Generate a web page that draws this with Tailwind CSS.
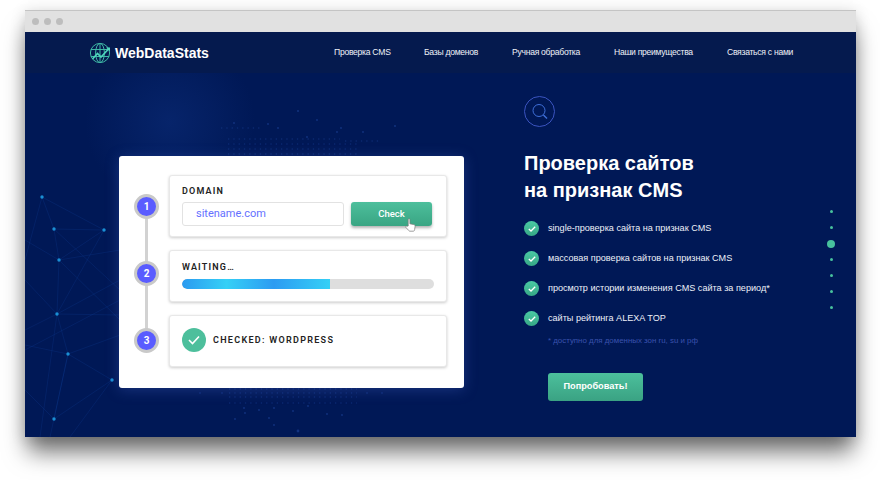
<!DOCTYPE html>
<html lang="ru">
<head>
<meta charset="utf-8">
<script src="https://cdn.jsdelivr.net/npm/@tailwindcss/browser@4"></script>
</head>
<body class="w-[880px] h-[480px] overflow-hidden bg-white font-['Liberation_Sans',Arial,sans-serif]">
<div class="pt-[10px] pl-[25px]">
  <div class="relative w-[831px] h-[427px] shadow-[0_18px_22px_-3px_rgba(0,0,0,0.55),0_2px_14px_rgba(0,0,0,0.16)]">
    <!-- window chrome -->
    <div class="h-[22px] bg-[#e1e1e1] border-t border-[#c4c4c4] border-b-[#9a9a9a] flex items-center gap-[5px] pl-[7px]">
      <span class="w-[7px] h-[7px] rounded-full bg-[#bdbdbd]"></span>
      <span class="w-[7px] h-[7px] rounded-full bg-[#bdbdbd]"></span>
      <span class="w-[7px] h-[7px] rounded-full bg-[#bdbdbd]"></span>
    </div>
    <!-- nav -->
    <header class="relative z-10 h-[41px] bg-[#051a4e] flex items-center pl-[64px] text-white">
      <svg class="w-[22px] h-[22px] shrink-0" viewBox="0 0 22 22" fill="none" stroke="#3fb8a6" stroke-width="1">
        <circle cx="11" cy="11" r="9.6"/>
        <ellipse cx="11" cy="11" rx="4.4" ry="9.6"/>
        <path d="M11 1.4V20.6M2 7.5H20M2 14.5H20"/>
        <path d="M3.5 17l5-5.5 3.5 3.5 8-8.5" stroke="#4fd6bd" stroke-width="1.6"/>
        <path d="M17 5.5h4v4z" fill="#4fd6bd" stroke="none"/>
      </svg>
      <span class="ml-[4px] w-[94px] text-[14px] leading-none font-bold whitespace-nowrap">WebDataStats</span>
      <nav class="ml-[125px] flex text-[8.6px] tracking-[-0.28px] leading-none text-[#eef1f8] whitespace-nowrap">
        <a class="w-[90px]">Проверка CMS</a>
        <a class="w-[88px]">Базы доменов</a>
        <a class="w-[102px]">Ручная обработка</a>
        <a class="w-[113px]">Наши преимущества</a>
        <a>Связаться с нами</a>
      </nav>
    </header>
    <!-- hero -->
    <main class="relative h-[364px] bg-[#001856] overflow-hidden flex text-white">
      <!-- decoration -->
      <svg class="absolute left-0 top-0 w-[831px] h-[364px]" viewBox="25 73 831 364" fill="none">
        <defs>
          <radialGradient id="glow"><stop offset="0" stop-color="#0b2c78" stop-opacity=".6"/><stop offset="1" stop-color="#0b2c78" stop-opacity="0"/></radialGradient>
        </defs>
        <circle cx="170" cy="122" r="85" fill="url(#glow)"/>
        <g stroke="#0f3a8c" stroke-width=".6" opacity=".5">
          <path d="M42 197L25 260M42 197L54 229M42 197L104 230M54 229L104 230M54 229L59 260M54 229L120 290M59 260L25 240M59 260L57 314M59 260L120 250M59 260L120 320M104 230L59 260M104 230L57 314M57 314L25 330M57 314L68 354M57 314L120 315M57 314L25 280M57 314L120 280M68 354L112 380M68 354L54 419M68 354L25 345M68 354L120 335M57 314L40 437M112 380L54 419M112 380L70 437M54 419L25 390M68 354L50 437M120 300L25 350"/>
        </g>
        <g fill="#1a8fd4">
          <circle cx="42" cy="197" r="1.7"/><circle cx="54" cy="229" r="1.7"/><circle cx="104" cy="230" r="1.7"/><circle cx="59" cy="260" r="1.7"/><circle cx="57" cy="314" r="1.7"/><circle cx="68" cy="354" r="1.7"/><circle cx="112" cy="380" r="1.7"/><circle cx="54" cy="419" r="1.7"/>
        </g>
        <g stroke="#1a3f92" stroke-width="1.1" stroke-dasharray="1.3 4" opacity=".65">
          <path d="M221 128H262M345 141H382M228 139H340M228 144H357M228 149H357M228 154H357"/>
          <path d="M229 389H357M229 393H357M229 397H357M229 403H357"/>
        </g>
        <g fill="#1a3f92" opacity=".7">
          <circle cx="298" cy="111" r="1"/><circle cx="317" cy="120" r=".9"/><circle cx="268" cy="124" r=".9"/><circle cx="278" cy="128" r=".9"/><circle cx="234" cy="123" r=".9"/><circle cx="341" cy="128" r=".9"/><circle cx="363" cy="132" r=".9"/><circle cx="395" cy="126" r="1"/><circle cx="307" cy="137" r=".9"/><circle cx="337" cy="132" r=".9"/>
          <circle cx="200" cy="393" r=".8"/><circle cx="222" cy="393" r=".8"/><circle cx="367" cy="393" r=".8"/><circle cx="382" cy="393" r=".8"/>
          <circle cx="244" cy="408" r=".9"/><circle cx="259" cy="410" r=".9"/><circle cx="274" cy="408" r=".9"/><circle cx="293" cy="411" r=".9"/><circle cx="308" cy="406" r=".9"/><circle cx="245" cy="413" r=".9"/><circle cx="235" cy="419" r=".9"/><circle cx="269" cy="418" r=".9"/><circle cx="274" cy="425" r=".9"/><circle cx="298" cy="431" r="1.4"/><circle cx="327" cy="414" r=".9"/><circle cx="342" cy="415" r=".9"/>
        </g>
      </svg>
      <div class="absolute right-[21px] top-[137px] w-[8px] flex flex-col items-center gap-[13px]">
        <span class="w-[3px] h-[3px] rounded-full bg-[#47c19d]"></span>
        <span class="w-[3px] h-[3px] rounded-full bg-[#47c19d]"></span>
        <span class="w-[8px] h-[8px] -my-[2.5px] rounded-full bg-[#47c19d]"></span>
        <span class="w-[3px] h-[3px] rounded-full bg-[#47c19d]"></span>
        <span class="w-[3px] h-[3px] rounded-full bg-[#47c19d]"></span>
        <span class="w-[3px] h-[3px] rounded-full bg-[#47c19d]"></span>
        <span class="w-[3px] h-[3px] rounded-full bg-[#47c19d]"></span>
      </div>

      <!-- card -->
      <section class="relative ml-[94px] mt-[83px] w-[345px] h-[232px] rounded-[3px] bg-white shadow-[0_2px_14px_rgba(70,100,200,0.35)] font-['Roboto',sans-serif] text-[#222]">
        <div class="absolute left-[26px] top-[50px] h-[135px] w-[3px] bg-[#d2d2d2]"></div>
        <div class="pl-[50px] pr-[17px] pt-[19px] flex flex-col gap-[13px]">
          <!-- step 1 -->
          <div class="relative h-[62px] rounded-[3px] border border-[#e8e8e8] bg-white shadow-[0_1px_3px_rgba(0,0,0,0.2)] px-[12px] pt-[9px]">
            <span class="absolute -left-[36px] top-[18px] w-[25px] h-[25px] rounded-full bg-[#5a5cff] border-[3px] border-[#c9c9c9] flex items-center justify-center text-white text-[10px] font-bold">1</span>
            <p class="text-[9px] leading-[12px] font-semibold tracking-[1.2px]">DOMAIN</p>
            <div class="mt-[5px] flex gap-[7px]">
              <div class="w-[162px] h-[24px] rounded-[3px] border border-[#e2e2e2] pl-[13px] text-[11px] leading-[22px] text-[#6470ff]">sitename.com</div>
              <div class="relative w-[81px] h-[24px] rounded-[3px] bg-gradient-to-b from-[#4dbf9c] to-[#39a583] shadow-[0_2px_3px_rgba(0,0,0,0.3)] text-center text-white text-[9.5px] leading-[23px] font-medium">Check
                <svg class="absolute left-[54px] top-[16px] w-[11px] h-[15px]" viewBox="0 0 11 15"><path d="M3.2 8V1.6c0-1.2 1.7-1.2 1.7 0v4.2l3.9.8c.9.2 1.4.8 1.3 1.7l-.5 3.4c-.1.9-.6 1.5-1.4 1.5H5c-.6 0-1-.3-1.4-.8L.9 9.4c-.6-.9.5-1.8 1.3-1.1z" fill="#fff" stroke="#777" stroke-width=".7"/></svg>
              </div>
            </div>
          </div>
          <!-- step 2 -->
          <div class="relative h-[52px] rounded-[3px] border border-[#e8e8e8] bg-white shadow-[0_1px_3px_rgba(0,0,0,0.2)] px-[12px] pt-[10px]">
            <span class="absolute -left-[36px] top-[10px] w-[25px] h-[25px] rounded-full bg-[#5a5cff] border-[3px] border-[#c9c9c9] flex items-center justify-center text-white text-[10px] font-bold">2</span>
            <p class="text-[9px] leading-[12px] font-semibold tracking-[1.2px]">WAITING…</p>
            <div class="mt-[6px] h-[10px] w-[252px] rounded-full bg-[#dedede] overflow-hidden">
              <div class="h-full w-[148px] rounded-l-full [background-image:linear-gradient(90deg,#2b9af0,#35d0f6_30%,#2c9bf2_62%,#35d0f6)]"></div>
            </div>
          </div>
          <!-- step 3 -->
          <div class="relative h-[52px] rounded-[3px] border border-[#e8e8e8] bg-white shadow-[0_1px_3px_rgba(0,0,0,0.2)] px-[12px] pb-[2px] flex items-center gap-[7px]">
            <span class="absolute -left-[36px] top-[12px] w-[25px] h-[25px] rounded-full bg-[#5a5cff] border-[3px] border-[#c9c9c9] flex items-center justify-center text-white text-[10px] font-bold">3</span>
            <span class="w-[24px] h-[24px] rounded-full bg-[#4dbf9c] flex items-center justify-center">
              <svg class="w-[12px] h-[10px]" viewBox="0 0 12 10" fill="none" stroke="#fff" stroke-width="1.6"><path d="M1 5l3.5 3.5L11 1.5"/></svg>
            </span>
            <p class="mt-[2px] text-[9px] font-semibold tracking-[1.3px]">CHECKED: WORDPRESS</p>
          </div>
        </div>
      </section>

      <!-- right column -->
      <section class="relative ml-[60px] pt-[23px] w-[300px]">
        <span class="block w-[31px] h-[31px] rounded-full border border-[#3b54c0]">
          <svg class="w-[29px] h-[29px]" viewBox="0 0 29 29" fill="none" stroke="#3f6fd8" stroke-width="1"><circle cx="14" cy="13.5" r="6"/><path d="M18.4 18l3.6 3.6" stroke-width="1.4"/></svg>
        </span>
        <h1 class="mt-[23px] text-[20px] leading-[27px] font-bold">Проверка сайтов<br>на признак CMS</h1>
        <ul class="mt-[17px] flex flex-col gap-[15px] text-[9.1px] leading-[15px] text-[#eef1f8]">
          <li class="flex items-center gap-[9px]"><span class="w-[15px] h-[15px] rounded-full bg-gradient-to-b from-[#4ac9a4] to-[#37a886] flex items-center justify-center"><svg class="w-[8px] h-[6px]" viewBox="0 0 8 6" fill="none" stroke="#fff" stroke-width="1.3"><path d="M.8 3l2.2 2L7.2.8"/></svg></span>single-проверка сайта на признак CMS</li>
          <li class="flex items-center gap-[9px]"><span class="w-[15px] h-[15px] rounded-full bg-gradient-to-b from-[#4ac9a4] to-[#37a886] flex items-center justify-center"><svg class="w-[8px] h-[6px]" viewBox="0 0 8 6" fill="none" stroke="#fff" stroke-width="1.3"><path d="M.8 3l2.2 2L7.2.8"/></svg></span>массовая проверка сайтов на признак CMS</li>
          <li class="flex items-center gap-[9px]"><span class="w-[15px] h-[15px] rounded-full bg-gradient-to-b from-[#4ac9a4] to-[#37a886] flex items-center justify-center"><svg class="w-[8px] h-[6px]" viewBox="0 0 8 6" fill="none" stroke="#fff" stroke-width="1.3"><path d="M.8 3l2.2 2L7.2.8"/></svg></span>просмотр истории изменения CMS сайта за период*</li>
          <li class="flex items-center gap-[9px]"><span class="w-[15px] h-[15px] rounded-full bg-gradient-to-b from-[#4ac9a4] to-[#37a886] flex items-center justify-center"><svg class="w-[8px] h-[6px]" viewBox="0 0 8 6" fill="none" stroke="#fff" stroke-width="1.3"><path d="M.8 3l2.2 2L7.2.8"/></svg></span>сайты рейтинга ALEXA TOP</li>
        </ul>
        <p class="mt-[9px] ml-[24px] text-[7.9px] leading-[12px] text-[#3a52ad]">* доступно для доменных зон ru, su и рф</p>
        <div class="mt-[26px] ml-[24px] w-[95px] h-[28px] rounded-[3px] bg-gradient-to-b from-[#4cc09c] to-[#3aa283] text-center text-[9.2px] leading-[27px] font-bold text-white">Попробовать!</div>
      </section>
    </main>
  </div>
</div>
</body>
</html>
